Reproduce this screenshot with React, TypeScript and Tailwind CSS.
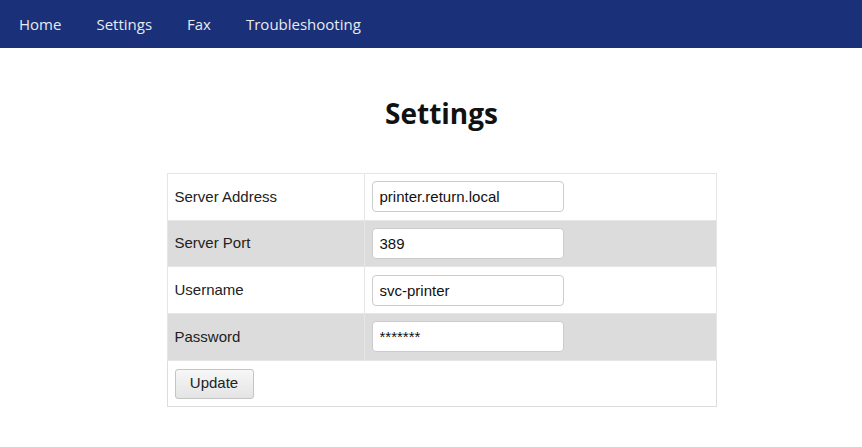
import React from 'react'

const rows = [
  { label: 'Server Address', value: 'printer.return.local', type: 'text' },
  { label: 'Server Port', value: '389', type: 'text' },
  { label: 'Username', value: 'svc-printer', type: 'text' },
  { label: 'Password', value: '*******', type: 'text' },
]

export default function App() {
  return (
    <div className="min-h-[447px] bg-white">
      {/* Top nav */}
      <nav className="flex h-12 items-center bg-[#1a3078] pl-[1.5px] font-['Open_Sans',sans-serif] text-[15px] text-[#e8eaf0]">
        {['Home', 'Settings', 'Fax', 'Troubleshooting'].map((item) => (
          <a key={item} className="px-[17.5px]">
            {item}
          </a>
        ))}
      </nav>

      <div className="flex flex-col items-center pl-[21px]">
        <h1 className="mt-[45px] font-['Open_Sans',sans-serif] text-[28px] font-bold leading-[40px] text-[#111]">
          Settings
        </h1>

        <table className="mt-[40px] w-[550px] border-collapse border border-[#dddddd] font-['Liberation_Sans',Arial,sans-serif] text-[15px] text-[#222]">
          <tbody>
            {rows.map((row, i) => (
              <tr key={row.label} className={i % 2 === 1 ? 'bg-[#dcdcdc]' : 'bg-white'}>
                <td className="h-[46.7px] w-[197px] border border-[#e6e6e6] pl-[7px] pr-2">{row.label}</td>
                <td className="border border-[#e6e6e6] pl-[7px] pr-2">
                  <input
                    type={row.type}
                    defaultValue={row.value}
                    className="h-[31px] w-[192px] rounded-[4px] border border-[#cccccc] bg-white px-[7px] text-[15px] text-[#111] outline-none"
                  />
                </td>
              </tr>
            ))}
            <tr className="bg-white">
              <td colSpan={2} className="h-[46.7px] pl-[7px] pr-2">
                <button className="h-[30px] w-[79px] rounded-[3px] border border-[#c4c4c4] bg-gradient-to-b from-[#f7f7f7] to-[#e4e4e4] text-[15px] text-[#222]">
                  Update
                </button>
              </td>
            </tr>
          </tbody>
        </table>
      </div>
    </div>
  )
}
